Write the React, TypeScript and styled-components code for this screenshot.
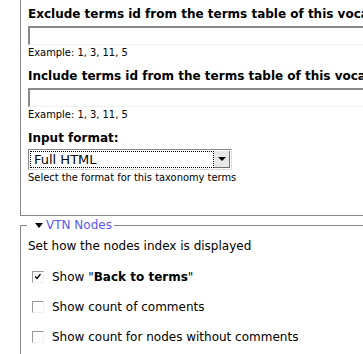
import React from "react";
import styled, { createGlobalStyle } from "styled-components";

const GlobalStyle = createGlobalStyle`
  html, body {
    margin: 0;
    padding: 0;
    background: #ffffff;
    overflow: hidden;
  }
  body {
    font-family: "DejaVu Sans", "Liberation Sans", sans-serif;
    color: #000;
  }
`;

const Page = styled.div`
  width: 363px;
  height: 354px;
  overflow: hidden;
  padding-left: 20px;
  box-sizing: border-box;
`;

const Fieldset = styled.fieldset<{ $cut?: boolean }>`
  margin: ${(p) => (p.$cut ? "-40px 0 2px 0" : "0")};
  padding: ${(p) => (p.$cut ? "45px 0 22px 7px" : "0 0 10px 7px")};
  border: 1px solid #888;
  border-right: none;
  min-width: 0;
`;

const Legend = styled.legend`
  font-size: 12px;
  line-height: 14px;
  color: #5a5af0;
  padding: 0 2px 0 8px;
  margin-left: -1px;
  display: flex;
  align-items: center;
  gap: 3px;
`;

const Arrow = styled.span`
  display: inline-block;
  width: 0;
  height: 0;
  border-left: 4px solid transparent;
  border-right: 4px solid transparent;
  border-top: 5px solid #000;
`;

const Item = styled.div`
  margin-bottom: 8px;
`;

const Label = styled.label<{ $gap?: number }>`
  display: block;
  font-weight: bold;
  font-size: 12px;
  white-space: nowrap;
  line-height: 16px;
  margin-bottom: ${(p) => p.$gap ?? 4}px;
`;

const TextInput = styled.div`
  height: 16px;
  border-top: 2px solid #8a8a8a;
  border-left: 2px solid #8a8a8a;
  border-bottom: 1px solid #f2f2f2;
  border-right: 1px solid #f2f2f2;
  margin-right: -10px;
`;

const Description = styled.div`
  font-size: 11px;
  line-height: 14px;
  margin-top: 1px;
  font-family: "DejaVu Sans Condensed", "DejaVu Sans", sans-serif;
`;

const Select = styled.div`
  width: 204px;
  height: 21px;
  box-sizing: border-box;
  border-top: 1px solid #8a8a8a;
  border-left: 1px solid #8a8a8a;
  border-right: 1px solid #dcdcdc;
  border-bottom: 1px solid #dcdcdc;
  display: flex;
  align-items: stretch;
  padding: 1px;
`;

const SelectValue = styled.div`
  flex: 1;
  border: 1px dotted #000;
  font-size: 13px;
  line-height: 14px;
  padding-left: 3px;
  display: flex;
  align-items: center;
`;

const DropButton = styled.div`
  width: 15px;
  background: #e8e8e8;
  border-right: 1px solid #6f6f6f;
  border-bottom: 1px solid #6f6f6f;
  display: flex;
  align-items: center;
  justify-content: center;
`;

const SmallArrow = styled.span`
  width: 0;
  height: 0;
  border-left: 4px solid transparent;
  border-right: 4px solid transparent;
  border-top: 4px solid #000;
`;

const Intro = styled.div`
  font-size: 12px;
  line-height: 15px;
  margin: 7px 0 16px 0;
`;

const CheckRow = styled.div`
  display: flex;
  align-items: center;
  gap: 8px;
  font-size: 12px;
  margin: 0 0 16px 4px;
`;

const Box = styled.span`
  width: 12px;
  height: 12px;
  box-sizing: border-box;
  border-top: 1px solid #9a9a9a;
  border-left: 1px solid #9a9a9a;
  border-right: 1px solid #f0f0f0;
  border-bottom: 1px solid #f0f0f0;
  background: #fff;
  display: flex;
  align-items: flex-start;
  justify-content: flex-start;
  padding: 1px;
`;

function Checkbox({ checked }: { checked?: boolean }) {
  return (
    <Box>
      {checked && (
        <svg width="8" height="7" viewBox="0 0 8 7">
          <path d="M1 3.5 L3 5.5 L6.5 1" stroke="#000" strokeWidth="1.3" fill="none" />
        </svg>
      )}
    </Box>
  );
}

export default function App() {
  return (
    <Page>
      <GlobalStyle />
      <Fieldset $cut>
        <Item>
          <Label>Exclude terms id from the terms table of this vocabulary:</Label>
          <TextInput />
          <Description>Example: 1, 3, 11, 5</Description>
        </Item>
        <Item>
          <Label>Include terms id from the terms table of this vocabulary:</Label>
          <TextInput />
          <Description>Example: 1, 3, 11, 5</Description>
        </Item>
        <Item>
          <Label $gap={3}>Input format:</Label>
          <Select>
            <SelectValue>Full HTML</SelectValue>
            <DropButton>
              <SmallArrow />
            </DropButton>
          </Select>
          <Description>Select the format for this taxonomy terms</Description>
        </Item>
      </Fieldset>
      <Fieldset>
        <Legend>
          <Arrow />
          VTN Nodes
        </Legend>
        <Intro>Set how the nodes index is displayed</Intro>
        <CheckRow>
          <Checkbox checked />
          <span>
            Show "<b>Back to terms</b>"
          </span>
        </CheckRow>
        <CheckRow>
          <Checkbox />
          <span>Show count of comments</span>
        </CheckRow>
        <CheckRow>
          <Checkbox />
          <span>Show count for nodes without comments</span>
        </CheckRow>
      </Fieldset>
    </Page>
  );
}
